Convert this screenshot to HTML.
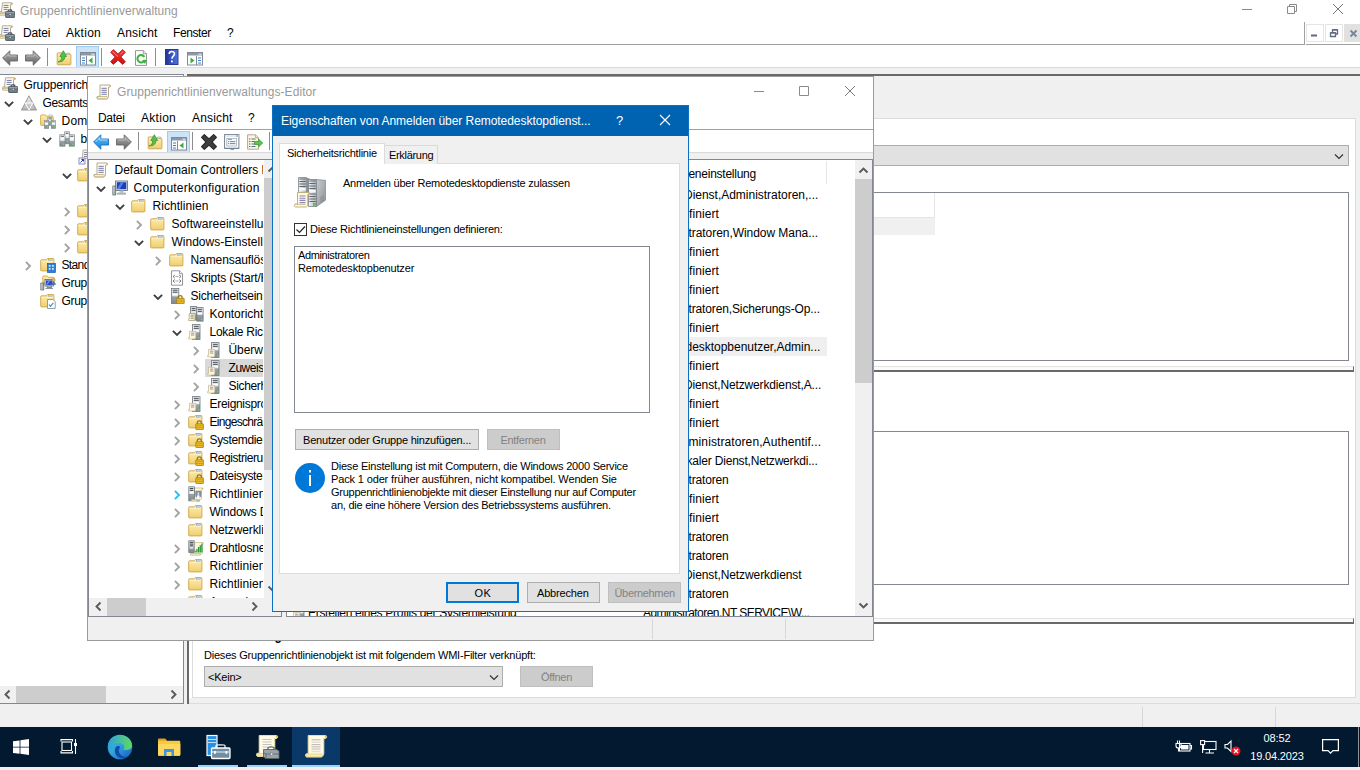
<!DOCTYPE html>
<html><head><meta charset="utf-8"><title>Gruppenrichtlinienverwaltung</title>
<style>
*{box-sizing:border-box;margin:0;padding:0}
html,body{width:1360px;height:770px;overflow:hidden;background:#fff}
body{font-family:"Liberation Sans",sans-serif;font-size:12px;color:#000;position:relative}
.a{position:absolute}
.t{position:absolute;white-space:nowrap;line-height:16px;height:16px;font-size:12px;letter-spacing:.12px}
.m{position:absolute;white-space:nowrap;line-height:14px;height:14px;font-size:11px;letter-spacing:-.24px}
.g{color:#999}
.clip{position:absolute;overflow:hidden}
svg{position:absolute;overflow:visible}
.btn{position:absolute;background:#e1e1e1;border:1px solid #adadad;text-align:center;font-size:11px;letter-spacing:-.24px;line-height:19px;height:21px;white-space:nowrap}
.btn.dis{background:#ccc;border-color:#bfbfbf;color:#838383}
.chev{position:absolute;width:9px;height:9px}
</style></head><body>
<svg width="0" height="0" style="position:absolute">
<defs>
<linearGradient id="gFold" x1="0" y1="0" x2="0" y2="1"><stop offset="0" stop-color="#fdeeb3"/><stop offset="1" stop-color="#f0ce6e"/></linearGradient>
<linearGradient id="gGray" x1="0" y1="0" x2="0" y2="1"><stop offset="0" stop-color="#a8a8a8"/><stop offset=".5" stop-color="#8a8a8a"/><stop offset="1" stop-color="#5e5e5e"/></linearGradient>
<linearGradient id="gBlue" x1="0" y1="0" x2="0" y2="1"><stop offset="0" stop-color="#5cc0f5"/><stop offset="1" stop-color="#1a84d8"/></linearGradient>
<linearGradient id="gSrv" x1="0" y1="0" x2="1" y2="0"><stop offset="0" stop-color="#d8dcdf"/><stop offset="1" stop-color="#8d9499"/></linearGradient>
<linearGradient id="gHelp" x1="0" y1="0" x2="1" y2="0"><stop offset="0" stop-color="#22338f"/><stop offset=".5" stop-color="#3a55c4"/><stop offset="1" stop-color="#4f73dc"/></linearGradient>
<linearGradient id="gTri" x1="0" y1="0" x2="0" y2="1"><stop offset="0" stop-color="#f0f0f0"/><stop offset="1" stop-color="#b4b4b4"/></linearGradient>
<linearGradient id="gSrvV" x1="0" y1="0" x2="0" y2="1"><stop offset="0" stop-color="#f1f3f5"/><stop offset=".5" stop-color="#dfe3e6"/><stop offset=".55" stop-color="#9aa2a9"/><stop offset="1" stop-color="#7f888f"/></linearGradient>
<linearGradient id="gRed" x1="0" y1="0" x2="0" y2="1"><stop offset="0" stop-color="#f43a3a"/><stop offset="1" stop-color="#c80f0f"/></linearGradient>
<linearGradient id="gBox" x1="0" y1="0" x2="0" y2="1"><stop offset="0" stop-color="#9cabb5"/><stop offset="1" stop-color="#64757f"/></linearGradient>
<linearGradient id="gPaper" x1="0" y1="0" x2="1" y2="0"><stop offset="0" stop-color="#fffbe6"/><stop offset="1" stop-color="#f3e3b0"/></linearGradient>

<symbol id="i-scroll" viewBox="0 0 16 16">
<path d="M4 1h9.800c1.100 0 1.100 2.200-.3 2.200h-1v9.300c0 1.300-.9 2.500-2.200 2.500H2c-1.600 0-1.600-2.700 0-2.700h2z" fill="#fffdf0" stroke="#aaa088" stroke-width=".9"/>
<path d="M1.200 12.500h9.800c.9 0 .9 2.300 0 2.300H1.500z" fill="#f8eecb" stroke="#b9a97a" stroke-width=".7"/>
<path d="M5.500 4.300h5.300M5.500 6.300h5.300M5.500 8.300h5.300M5.500 10.300h5.300" stroke="#767aa6" stroke-width="1"/>
<path d="M12.800 1.200l2 .3-.7 1.500z" fill="#dba640"/>
</symbol>

<symbol id="i-gpmc" viewBox="0 0 16 16">
<path d="M3.500 .8h9.300c1 0 1 1.800-.3 1.800h-1v7.600H2.500c-1 0-1 1.600-2 1.600 0-2 .5-2.400 2-2.400z" fill="#fffdf2" stroke="#aaa088" stroke-width=".9"/>
<path d="M.6 11.300h6.500c.8 0 .8 1.900 0 1.900H.8z" fill="#f8eecb" stroke="#b9a97a" stroke-width=".8"/>
<path d="M4.600 3.400h5M4.600 5.400h5M4.600 7.400h4" stroke="#767aa6" stroke-width="1"/>
<path d="M11.500 1l1.900.3-.7 1.400z" fill="#dba640"/>
<path d="M9.200 9.500v-1c0-.8 3.600-.8 3.600 0v1" fill="none" stroke="#3f4a52" stroke-width="1.200"/>
<rect x="6.600" y="9.500" width="9" height="6" rx=".6" fill="url(#gBox)" stroke="#46525a" stroke-width=".8"/>
<path d="M6.600 12.100h9" stroke="#46525a" stroke-width=".7"/>
<rect x="10.300" y="11.300" width="1.700" height="1.900" fill="#eef2f4" stroke="#46525a" stroke-width=".4"/>
</symbol>

<symbol id="i-backg" viewBox="0 0 16 16"><path d="M.6 8l7.200-7.200v4.200h7.700v6H7.800v4.200z" fill="url(#gGray)" stroke="#666" stroke-width=".9" stroke-linejoin="round"/><path d="M2.500 8l4.300-4.300v2.300h7.700" fill="none" stroke="#c4c4c4" stroke-width=".9"/></symbol>
<symbol id="i-fwdg" viewBox="0 0 16 16"><path d="M15.400 8L8.200.8v4.200H.5v6h7.700v4.200z" fill="url(#gGray)" stroke="#666" stroke-width=".9" stroke-linejoin="round"/><path d="M1.500 6h7.700V3.700L13.500 8" fill="none" stroke="#c4c4c4" stroke-width=".9"/></symbol>
<symbol id="i-backb" viewBox="0 0 16 16"><path d="M.6 8l7.200-7.200v4.200h7.700v6H7.800v4.200z" fill="url(#gBlue)" stroke="#1a6fc0" stroke-width=".9" stroke-linejoin="round"/><path d="M2.500 8l4.300-4.300v2.300h7.700" fill="none" stroke="#b8e6fc" stroke-width=".9"/></symbol>

<symbol id="i-folder" viewBox="0 0 16 16"><path d="M.7 3.500c0-.4.3-.7.7-.7h4.800l1.200-1.300h5.800c.4 0 .7.300.7.700v11c0 .4-.3.700-.7.700H1.400c-.4 0-.7-.3-.7-.7z" fill="url(#gFold)" stroke="#cfa448" stroke-width=".9"/><path d="M1.300 4.500h12" stroke="#fff6d0" stroke-width=".7" opacity=".8"/><rect x="8.700" y="2.300" width="3.600" height="1.100" fill="#fff" stroke="#7fa3d6" stroke-width=".5"/></symbol>

<symbol id="i-up" viewBox="0 0 16 16">
<path d="M1.200 3.600c0-.4.300-.7.700-.7h4.300l1 1.300h7c.4 0 .7.300.7.700v9.200c0 .4-.3.700-.7.700H1.900c-.4 0-.7-.3-.7-.7z" fill="url(#gFold)" stroke="#c9a24e" stroke-width=".9"/>
<path d="M10.500 3h3v1h-3z" fill="#fff" stroke="#6f98c8" stroke-width=".5"/>
<path d="M2 11.800c2.800-.6 3.800-2.300 3.600-5.300H3.800L7.300.7l3.300 5.800H8.800c.2 3.600-2.800 5.800-6.800 5.300z" fill="#52c048" stroke="#2f8f2c" stroke-width=".7" stroke-linejoin="round"/>
</symbol>

<symbol id="i-tree" viewBox="0 0 16 16">
<rect x=".5" y="1.500" width="15" height="12.500" fill="#fff" stroke="#7f8a96" stroke-width="1"/>
<rect x="1" y="2" width="14" height="2.500" fill="#8c98a6"/>
<rect x="11.500" y="2.600" width="1.200" height="1.200" fill="#fff"/><rect x="13.200" y="2.600" width="1.200" height="1.200" fill="#fff"/>
<path d="M6.500 5v9" stroke="#7f8a96" stroke-width="1"/>
<path d="M2 7h3M2 9.500h3M2 12h3" stroke="#3c78d0" stroke-width="1.200"/>
<path d="M12.500 6.500v6l-4-3z" fill="#3cae3c"/>
</symbol>

<symbol id="i-pane" viewBox="0 0 16 16">
<rect x=".5" y="1.500" width="15" height="12.500" fill="#fff" stroke="#7f8a96" stroke-width="1"/>
<rect x="1" y="2" width="14" height="2.500" fill="#8c98a6"/>
<rect x="11.500" y="2.600" width="1.200" height="1.200" fill="#fff"/><rect x="13.200" y="2.600" width="1.200" height="1.200" fill="#fff"/>
<path d="M9.500 5v9" stroke="#7f8a96" stroke-width="1"/>
<path d="M11 7h3M11 9.500h3M11 12h3" stroke="#3c78d0" stroke-width="1.200"/>
<path d="M3.500 6.500v6l4-3z" fill="#3cae3c"/>
</symbol>

<symbol id="i-xred" viewBox="0 0 16 16"><path d="M3.300 .6L8 4.900 12.700 .6l2.700 2.700L10.900 8l4.500 4.700-2.700 2.700L8 11.100l-4.700 4.300-2.700-2.700L5.100 8 .6 3.300z" fill="url(#gRed)" stroke="#b01010" stroke-width=".8" stroke-linejoin="round"/><path d="M2.600 2.600l5.400 5M13.400 2.600l-3 2.800" stroke="#ff8a8a" stroke-width=".9" fill="none"/></symbol>
<symbol id="i-xblk" viewBox="0 0 16 16"><path d="M3.300 .6L8 4.900 12.700 .6l2.700 2.700L10.900 8l4.500 4.700-2.700 2.700L8 11.100l-4.700 4.300-2.700-2.700L5.100 8 .6 3.300z" fill="#3e3e3e" stroke="#2a2a2a" stroke-width="1.200" stroke-linejoin="round"/></symbol>

<symbol id="i-refresh" viewBox="0 0 16 16">
<path d="M2.500 .6h7.800l3.200 3.200v11.600h-11z" fill="#fff" stroke="#8a8a8a" stroke-width=".9"/>
<path d="M10.300 .6v3.200h3.200" fill="#ececec" stroke="#8a8a8a" stroke-width=".8"/>
<path d="M11.700 9.800a3.700 3.700 0 1 1-.3-2.800" fill="none" stroke="#3fb53f" stroke-width="2.100"/>
<path d="M9 10.300l5-.6-2 4.200z" fill="#3fb53f"/>
</symbol>

<symbol id="i-help" viewBox="0 0 16 16">
<rect x="1.500" y=".5" width="12.500" height="15" fill="url(#gHelp)" stroke="#1f2f8c" stroke-width=".9"/>
<path d="M5.200 5c0-3.300 5.300-3.300 5.300-.2 0 2.300-2.600 2.500-2.600 5" fill="none" stroke="#fff" stroke-width="1.600"/>
<rect x="7" y="11.500" width="1.800" height="1.800" fill="#fff"/>
</symbol>

<symbol id="i-props" viewBox="0 0 16 16">
<rect x=".6" y=".6" width="14.300" height="13.800" fill="#fff" stroke="#78838f" stroke-width="1"/>
<rect x="1.100" y="1.100" width="13.300" height="2" fill="#e4e8ec"/>
<rect x="12.300" y="1.400" width="1.400" height="1.200" fill="#78838f"/>
<rect x="2.800" y="4.500" width="9.800" height="7.500" fill="#f7f9fb" stroke="#9aa5b2" stroke-width=".7"/>
<path d="M4 5.500h4" stroke="#8a96a4" stroke-width=".9"/>
<path d="M5.800 7.600h5.500M5.800 9.600h5.500" stroke="#5d78a8" stroke-width=".9"/>
<path d="M4 7.600h1M4 9.600h1" stroke="#2a8fe0" stroke-width=".9"/>
<path d="M.6 14.400h14.300" stroke="#78838f" stroke-width="1.200"/>
<path d="M6.500 15.200h3.500" stroke="#2aa0ee" stroke-width="1.300"/>
</symbol>

<symbol id="i-export" viewBox="0 0 16 16">
<path d="M.6 .8h8l3 3v11.400H.6z" fill="#fbf6e2" stroke="#a9a27e" stroke-width=".9"/>
<path d="M8.600 .8v3h3" fill="#ece4c2" stroke="#a9a27e" stroke-width=".8"/>
<path d="M4.500 5h4M4.500 7.500h3M4.500 10h3M4.500 12.500h4" stroke="#5d6898" stroke-width="1"/>
<path d="M2.300 5h1M2.300 7.500h1M2.300 10h1M2.300 12.500h1" stroke="#333" stroke-width="1"/>
<path d="M7.500 7.500h4.200V5.200l4 3.800-4 3.800v-2.300H7.500z" fill="#55c84e" stroke="#2f922c" stroke-width=".7" stroke-linejoin="round"/>
</symbol>

<symbol id="i-forest" viewBox="0 0 16 16">
<path d="M8 .8l7.500 14.200H.5z" fill="url(#gTri)" stroke="#8f8f8f" stroke-width=".9" stroke-linejoin="round"/>
<path d="M4.300 8h7.400M4.300 8L8 15M11.700 8L8 15" fill="none" stroke="#fff" stroke-width="1"/>
</symbol>

<symbol id="i-srvs" viewBox="0 0 16 16">
<rect x="5.700" y=".8" width="4.800" height="12" fill="url(#gSrvV)" stroke="#7b8389" stroke-width=".7"/>
<rect x=".8" y="3.800" width="5.200" height="11.400" fill="url(#gSrvV)" stroke="#7b8389" stroke-width=".7"/>
<rect x="10.200" y="3.800" width="5.200" height="11.400" fill="url(#gSrvV)" stroke="#7b8389" stroke-width=".7"/>
<path d="M6.700 2.300h2.800M1.800 5.300h3.200M11.200 5.300h3.200" stroke="#4a5157" stroke-width=".9"/>
<rect x="1.600" y="6.800" width="3.600" height="1.600" fill="#fff"/><rect x="11" y="6.800" width="3.600" height="1.600" fill="#fff"/><rect x="6.500" y="3.800" width="3.200" height="1.500" fill="#fff"/>
<rect x="3.800" y="12.600" width="1.500" height="1.500" fill="#66e24a"/><rect x="13.200" y="12.600" width="1.500" height="1.500" fill="#66e24a"/><rect x="8" y="9.800" width="1.500" height="1.500" fill="#66e24a"/>
</symbol>

<symbol id="i-domfolder" viewBox="0 0 16 16">
<path d="M.6 2.700c0-.5.3-.8.8-.8h3.800l1 1.300h6.200c.5 0 .8.300.8.800v7.700c0 .5-.3.800-.8.800H1.400c-.5 0-.8-.3-.8-.8z" fill="url(#gFold)" stroke="#d3a84a" stroke-width=".9"/>
<rect x="9" y="1.900" width="3.400" height="1.200" fill="#fff" stroke="#86a6cf" stroke-width=".5"/>
<rect x="7.800" y="4.600" width="4" height="7" fill="url(#gSrvV)" stroke="#7b8389" stroke-width=".6"/>
<rect x="4.500" y="7.600" width="4.200" height="7.800" fill="url(#gSrvV)" stroke="#7b8389" stroke-width=".6"/>
<rect x="11.300" y="7.600" width="4.200" height="7.800" fill="url(#gSrvV)" stroke="#7b8389" stroke-width=".6"/>
<path d="M5.300 8.800h2.600M12.100 8.800h2.600M8.600 5.800h2.400" stroke="#4a5157" stroke-width=".8"/>
<rect x="5.200" y="9.900" width="2.800" height="1.300" fill="#fff"/><rect x="12" y="9.900" width="2.800" height="1.300" fill="#fff"/>
<rect x="6.800" y="13.300" width="1.300" height="1.300" fill="#66e24a"/><rect x="13.600" y="13.300" width="1.300" height="1.300" fill="#66e24a"/><rect x="9.600" y="9.300" width="1.300" height="1.300" fill="#66e24a"/>
</symbol>

<symbol id="i-flock" viewBox="0 0 16 16"><path d="M.7 3.500c0-.4.3-.7.7-.7h4.800l1.200-1.300h5.800c.4 0 .7.300.7.700v11c0 .4-.3.700-.7.700H1.400c-.4 0-.7-.3-.7-.7z" fill="url(#gFold)" stroke="#cfa448" stroke-width=".9"/><path d="M1.300 4.500h12" stroke="#fff6d0" stroke-width=".7" opacity=".8"/><rect x="8.700" y="2.300" width="3.600" height="1.100" fill="#fff" stroke="#7fa3d6" stroke-width=".5"/>
<path d="M9.300 10V8.600c0-2.400 4-2.400 4 0V10" fill="none" stroke="#9a7612" stroke-width="1.300"/>
<rect x="7.800" y="9.800" width="7.600" height="5.700" rx=".5" fill="#eebc2a" stroke="#a37c12" stroke-width=".8"/>
<path d="M8.400 11.700h6.400M8.400 13.500h6.400" stroke="#c0941a" stroke-width=".7"/>
</symbol>

<symbol id="i-comp" viewBox="0 0 16 16">
<rect x="3.500" y="1" width="12" height="9.500" fill="#dfe3e7" stroke="#6e7880" stroke-width=".9"/>
<rect x="4.800" y="2.200" width="9.500" height="7" fill="#1a3fb8"/>
<path d="M4.800 9.200l4-7h3l-4 7z" fill="#5f8af0" opacity=".8"/>
<path d="M7.500 10.500h4v2h-4z" fill="#b8bfc5"/><path d="M5.500 13h8v1.200h-8z" fill="#cfd4d8" stroke="#7d868d" stroke-width=".6"/>
<rect x=".8" y="6" width="3" height="9" fill="url(#gSrv)" stroke="#5f676d" stroke-width=".7"/>
<rect x="1.500" y="12.500" width="1.200" height="1.200" fill="#4fd04a"/>
</symbol>

<symbol id="i-script" viewBox="0 0 16 16">
<path d="M2.500 .8h8l3 3v11.400h-11z" fill="#fff" stroke="#8a8a8a" stroke-width=".9"/>
<path d="M10.500 .8v3h3" fill="#eee" stroke="#8a8a8a" stroke-width=".8"/>
<path d="M5.800 5L4 6.500 5.800 8M10.200 5L12 6.500 10.200 8M5.800 9.500L4 11l1.800 1.500M10.200 9.500L12 11l-1.800 1.500" fill="none" stroke="#5c6670" stroke-width=".9"/>
<path d="M6.600 6.500h2.800M6.600 11h2.800" stroke="#5c6670" stroke-width=".9" stroke-dasharray="1 .8"/>
</symbol>

<symbol id="i-srvlock" viewBox="0 0 16 16">
<rect x="2.500" y=".5" width="7.300" height="15" fill="url(#gSrvV)" stroke="#6f777d" stroke-width=".8"/>
<path d="M3.700 2.200h4.900M3.700 4.200h4.900" stroke="#3e454a" stroke-width="1"/>
<rect x="3.500" y="5.800" width="5.300" height="1.400" fill="#fff"/>
<path d="M9.300 10.500V9.300c0-2.300 3.800-2.300 3.800 0v1.200" fill="none" stroke="#9a7612" stroke-width="1.300"/>
<rect x="7.600" y="10.300" width="7.600" height="5.400" rx=".5" fill="#eebc2a" stroke="#a37c12" stroke-width=".8"/>
<path d="M8.200 12.100h6.400M8.200 13.800h6.400" stroke="#c0941a" stroke-width=".7"/>
</symbol>

<symbol id="i-srvdoc" viewBox="0 0 16 16">
<rect x="4.500" y=".6" width="7.500" height="14.800" fill="url(#gSrvV)" stroke="#6f777d" stroke-width=".8"/>
<path d="M5.800 2.300h5M5.800 4.300h5" stroke="#3e454a" stroke-width="1"/>
<rect x="5.500" y="6" width="5.500" height="1.400" fill="#fff"/>
<rect x="10" y="13" width="1.500" height="1.500" fill="#5fe04a"/>
<path d="M1.500 7.300h6.300v6c0 1-.6 1.700-1.300 1.700H.9c-.8 0-.8-1.600 0-1.600h.6z" fill="#fff6d8" stroke="#c2b48a" stroke-width=".7"/>
<path d="M3 9.200h3.300M3 11h3.300" stroke="#8a86b0" stroke-width=".9"/>
</symbol>

<symbol id="i-srvdoc2" viewBox="0 0 16 16">
<rect x="2.500" y=".6" width="6.300" height="13.500" fill="url(#gSrvV)" stroke="#6f777d" stroke-width=".8"/>
<rect x="8.800" y="1.600" width="6.300" height="13.500" fill="url(#gSrvV)" stroke="#6f777d" stroke-width=".8"/>
<path d="M3.600 2.300h4M3.600 4.300h4M9.900 3.300h4M9.900 5.300h4" stroke="#3e454a" stroke-width="1"/>
<rect x="9.800" y="7" width="4.300" height="1.300" fill="#fff"/>
<rect x="13" y="12.800" width="1.500" height="1.500" fill="#5fe04a"/>
<path d="M1.200 7.500h5.800v5.500c0 1-.6 1.600-1.200 1.600H.8c-.7 0-.7-1.500 0-1.500h.4z" fill="url(#gPaper)" stroke="#b3a47a" stroke-width=".8"/>
<path d="M2.600 9.200h3M2.600 10.800h3M2.600 12.300h3" stroke="#8d8a92" stroke-width=".8"/>
</symbol>

<symbol id="i-ipsec" viewBox="0 0 16 16">
<path d="M6.500 2h8c.9 0 .9 1.600-.2 1.600h-.8v8.400c0 1-.6 1.800-1.500 1.800H4.500c-.9 0-.9-1.700 0-1.700h2z" fill="#fff6d8" stroke="#c2b48a" stroke-width=".7"/>
<path d="M13.800 2.100l1.400.3-.5 1z" fill="#dba640"/>
<rect x=".8" y=".8" width="5.600" height="14" fill="url(#gSrvV)" stroke="#6f777d" stroke-width=".8"/>
<path d="M1.800 2.400h3.600M1.800 4.300h3.600" stroke="#2f363b" stroke-width="1"/>
<rect x="1.600" y="5.800" width="4" height="1.300" fill="#fff"/>
<path d="M7.800 5.200h5v4.500c0 2.600-5 2.600-5 0z" fill="#8c98aa" stroke="#5f6b7e" stroke-width=".7"/>
<path d="M10.300 6.600v2.200M9.500 9.800h1.600v2.500H9.500z" stroke="#fff" stroke-width="1" fill="#fff"/>
<path d="M3.500 13.400h7.500c.7 0 .7 1.600 0 1.600H3.500z" fill="#f8eecb" stroke="#b9a97a" stroke-width=".6"/>
<path d="M9 14.500v1.200M11 14.500v1.200" stroke="#2a7fd0" stroke-width=".9"/>
</symbol>

<symbol id="i-wifi" viewBox="0 0 16 16">
<path d="M5.500 2.500h9.800c.9 0 .9 1.600-.2 1.600h-.6v8.200c0 1-.6 1.800-1.500 1.800H3.500c-.9 0-.9-1.700 0-1.700h2z" fill="#fff6d8" stroke="#c2b48a" stroke-width=".7"/>
<rect x=".8" y=".8" width="5.400" height="11.700" fill="url(#gSrvV)" stroke="#6f777d" stroke-width=".8"/>
<path d="M1.700 2.300h3.600M1.700 4.100h3.600M1.700 5.900h3.600" stroke="#2f363b" stroke-width="1"/>
<rect x="1.600" y="7.300" width="3.800" height="1.200" fill="#fff"/>
<path d="M5.800 12.500L14.500 3v9.500z" fill="#e6f3e2"/>
<path d="M7.200 12.500v-1.800M8.900 12.500v-3.600M10.600 12.500v-5.400M12.300 12.500v-7.200M13.900 12.500v-9" stroke="#2c9a3a" stroke-width="1.300"/>
<path d="M2.500 13.600h9.500c.7 0 .7 1.600 0 1.600H2.500z" fill="#f8eecb" stroke="#b9a97a" stroke-width=".6"/>
</symbol>

<symbol id="i-sites" viewBox="0 0 16 16"><path d="M.7 3.500c0-.4.3-.7.7-.7h4.800l1.200-1.300h5.800c.4 0 .7.300.7.700v11c0 .4-.3.700-.7.700H1.400c-.4 0-.7-.3-.7-.7z" fill="url(#gFold)" stroke="#cfa448" stroke-width=".9"/><path d="M1.300 4.500h12" stroke="#fff6d0" stroke-width=".7" opacity=".8"/><rect x="8.700" y="2.300" width="3.600" height="1.100" fill="#fff" stroke="#7fa3d6" stroke-width=".5"/>
<rect x="7.500" y="6.500" width="8" height="9" fill="#2f7fd8" stroke="#1c5aa8" stroke-width=".7"/>
<path d="M8.800 8h1.800v1.800H8.800zM12 8h1.800v1.800H12zM8.800 11h1.800v1.800H8.800zM12 11h1.800v1.800H12z" fill="#cfe6ff"/>
</symbol>

<symbol id="i-model" viewBox="0 0 16 16">
<path d="M2.800 1.800c0-.5.3-.8.800-.8h3.800l1 1.300h5c.5 0 .8.300.8.800v6H2.800z" fill="url(#gFold)" stroke="#d3a84a" stroke-width=".9"/>
<rect x="5" y="4.500" width="8.500" height="6.500" fill="#dfe3e7" stroke="#5f676d" stroke-width=".8"/>
<rect x="6" y="5.400" width="6.500" height="4.600" fill="#2a50c8"/>
<path d="M7 9.500l2.500-4M9 12.500h3" stroke="#9db8ff" stroke-width=".8"/>
<rect x=".8" y="8" width="3" height="7" fill="url(#gSrv)" stroke="#5f676d" stroke-width=".7"/>
<path d="M7 11h4.500v1.500H7zM5.500 13.500h7.500" stroke="#6e7880" stroke-width=".8" fill="#cfd4d8"/>
<circle cx="13.500" cy="5" r="1.600" fill="#e8c07a" stroke="#8a6a3a" stroke-width=".5"/>
<path d="M11.500 9.500c0-2.600 4-2.600 4 0z" fill="#4a7fd0" stroke="#2c5aa0" stroke-width=".5"/>
</symbol>

<symbol id="i-result" viewBox="0 0 16 16"><path d="M.7 3.500c0-.4.3-.7.7-.7h4.800l1.200-1.300h5.800c.4 0 .7.300.7.700v11c0 .4-.3.700-.7.700H1.400c-.4 0-.7-.3-.7-.7z" fill="url(#gFold)" stroke="#cfa448" stroke-width=".9"/><path d="M1.300 4.500h12" stroke="#fff6d0" stroke-width=".7" opacity=".8"/><rect x="8.700" y="2.300" width="3.600" height="1.100" fill="#fff" stroke="#7fa3d6" stroke-width=".5"/>
<path d="M7.500 6.500h5.500l2.200 2.200v6.800H7.500z" fill="#fff" stroke="#7d868d" stroke-width=".8"/>
<path d="M9 11.500l1.500 1.800 2.800-3.500" fill="none" stroke="#2a8fd0" stroke-width="1.100"/>
</symbol>

<symbol id="i-gpolink" viewBox="0 0 16 16">
<path d="M5 1h8c.8 0 .8 1.600-.2 1.600h-.8v7H4.500c-.8 0-.8 1.400-1.800 1.400 0-1.800.5-2.200 1.800-2.200z" fill="url(#gPaper)" stroke="#a99f82" stroke-width=".8"/>
<path d="M6 3.500h4.500M6 5.500h4.500M6 7.500h4" stroke="#7b7fa8" stroke-width=".9"/>
<rect x="1" y="9" width="6" height="6" fill="#fff" stroke="#6b6fb8" stroke-width=".8"/>
<path d="M2.500 13.500l3-3M3.500 10.500h2v2" fill="none" stroke="#2a2ab0" stroke-width="1"/>
</symbol>

<symbol id="c-exp" viewBox="0 0 10 10"><path d="M.9 2.900l4.100 4.100 4.100-4.100" fill="none" stroke="#404040" stroke-width="1.900"/></symbol>
<symbol id="c-col" viewBox="0 0 10 10"><path d="M2.900 .9l4.100 4.100-4.100 4.100" fill="none" stroke="#a3a3a3" stroke-width="1.900"/></symbol>
<symbol id="c-hot" viewBox="0 0 10 10"><path d="M2.900 .9l4.100 4.100-4.100 4.100" fill="none" stroke="#26c0f2" stroke-width="1.900"/></symbol>
</defs></svg>
<svg class="a" style="left:-1px;top:2px" width="16" height="16"><use href="#i-gpmc"/></svg>
<div class="t" style="left:20px;top:3px;letter-spacing:0.088px;color:#999">Gruppenrichtlinienverwaltung</div>
<svg class="a" style="left:1230px;top:0" width="130" height="22"><g stroke="#8a8a8a" stroke-width="1" fill="none"><path d="M12 9.500h10"/><path d="M57.500 6.500h7v7h-7zM59.500 6.500v-2h7v7h-2"/><path d="M103 4l10 10M113 4l-10 10" stroke="#777"/></g></svg>
<svg class="a" style="left:-1px;top:25px" width="16" height="16"><use href="#i-gpmc"/></svg>
<div class="t" style="left:23px;top:25px;letter-spacing:-0.179px;">Datei</div>
<div class="t" style="left:66px;top:25px;letter-spacing:0.288px;">Aktion</div>
<div class="t" style="left:117px;top:25px;letter-spacing:0.157px;">Ansicht</div>
<div class="t" style="left:173px;top:25px;letter-spacing:-0.398px;">Fenster</div>
<div class="t" style="left:227px;top:25px;">?</div>
<div class="a" style="left:0;top:44px;width:1304px;height:1px;background:#a0a0a0"></div>
<div class="a" style="left:1304px;top:22px;width:1px;height:23px;background:#a0a0a0"></div>
<div class="a" style="left:1306px;top:44px;width:54px;height:1px;background:#a0a0a0"></div>
<div class="a" style="left:1306px;top:24px;width:18px;height:18px;border:1px solid #e5e5e5;background:#fff"></div>
<div class="a" style="left:1325px;top:24px;width:18px;height:18px;border:1px solid #e5e5e5;background:#fff"></div>
<div class="a" style="left:1344px;top:24px;width:16px;height:18px;background:#e1e1e1"></div>
<svg class="a" style="left:1306px;top:24px" width="54" height="18"><g fill="none" stroke="#5d6b80"><path d="M5 11.500h6" stroke-width="2"/><path d="M24.500 9h5v3.500h-5zM24.500 8.700h5M26.500 8v-2h5v4h-2M26.500 5.700h5" stroke-width="1.300"/><path d="M44.500 6.500l6 6M50.500 6.500l-6 6" stroke="#74869c" stroke-width="1.800"/></g></svg>
<svg class="a" style="left:2px;top:49.5px" width="16" height="16"><use href="#i-backg"/></svg>
<svg class="a" style="left:25px;top:49.5px" width="16" height="16"><use href="#i-fwdg"/></svg>
<div class="a" style="left:47px;top:48px;width:1px;height:18px;background:#8d8d8d"></div>
<svg class="a" style="left:56px;top:49.5px" width="16" height="16"><use href="#i-up"/></svg>
<div class="a" style="left:76px;top:46px;width:23px;height:22px;background:#cce4f7;border:1px solid #9fcdf3"></div>
<svg class="a" style="left:80px;top:51px" width="16" height="16"><use href="#i-tree"/></svg>
<div class="a" style="left:101px;top:48px;width:1px;height:18px;background:#8d8d8d"></div>
<svg class="a" style="left:110px;top:49px" width="16" height="16"><use href="#i-xred"/></svg>
<svg class="a" style="left:133px;top:50px" width="16" height="16"><use href="#i-refresh"/></svg>
<div class="a" style="left:155px;top:48px;width:1px;height:18px;background:#8d8d8d"></div>
<svg class="a" style="left:164px;top:49px" width="16" height="16"><use href="#i-help"/></svg>
<svg class="a" style="left:187px;top:51px" width="16" height="16"><use href="#i-pane"/></svg>
<div class="a" style="left:0;top:67px;width:1360px;height:1px;background:#dadada"></div>
<div class="a" style="left:0;top:68px;width:1360px;height:6px;background:#f0f0f0"></div>
<div class="a" style="left:0;top:74px;width:184px;height:1px;background:#828790"></div>
<div class="a" style="left:187px;top:74px;width:1173px;height:2px;background:#696969"></div>
<div class="a" style="left:184px;top:74px;width:3px;height:630px;background:#f0f0f0"></div>
<div class="a" style="left:183px;top:75px;width:1px;height:629px;background:#828790"></div>
<div class="a" style="left:0;top:703px;width:184px;height:1px;background:#828790"></div>
<div class="a" style="left:187px;top:76px;width:2px;height:628px;background:#696969"></div>
<div class="clip" style="left:0;top:75px;width:183px;height:611px">
<svg class="a" style="left:2px;top:2px" width="16" height="16"><use href="#i-gpmc"/></svg>
<div class="t" style="left:23.5px;top:2px;letter-spacing:-0.125px;">Gruppenrichtlinienverwaltung</div>
<svg class="a" style="left:4px;top:23.8px" width="10" height="10"><use href="#c-exp"/></svg>
<svg class="a" style="left:21px;top:20px" width="16" height="16"><use href="#i-forest"/></svg>
<div class="t" style="left:42.5px;top:20px;letter-spacing:-0.369px;">Gesamtstruktur</div>
<svg class="a" style="left:23px;top:41.8px" width="10" height="10"><use href="#c-exp"/></svg>
<svg class="a" style="left:40px;top:38px" width="16" height="16"><use href="#i-domfolder"/></svg>
<div class="t" style="left:61.5px;top:38px;letter-spacing:0.228px;">Domänen</div>
<svg class="a" style="left:42px;top:59.8px" width="10" height="10"><use href="#c-exp"/></svg>
<svg class="a" style="left:59px;top:56px" width="16" height="16"><use href="#i-srvs"/></svg>
<div class="t" style="left:80.5px;top:56px;">beispiel.local</div>
<svg class="a" style="left:78px;top:74px" width="16" height="16"><use href="#i-gpolink"/></svg>
<svg class="a" style="left:62px;top:95.8px" width="10" height="10"><use href="#c-exp"/></svg>
<svg class="a" style="left:76.5px;top:92px" width="16" height="16"><use href="#i-folder"/></svg>
<svg class="a" style="left:62px;top:131.8px" width="10" height="10"><use href="#c-col"/></svg>
<svg class="a" style="left:76.5px;top:128px" width="16" height="16"><use href="#i-folder"/></svg>
<svg class="a" style="left:62px;top:149.8px" width="10" height="10"><use href="#c-col"/></svg>
<svg class="a" style="left:76.5px;top:146px" width="16" height="16"><use href="#i-folder"/></svg>
<svg class="a" style="left:62px;top:167.8px" width="10" height="10"><use href="#c-col"/></svg>
<svg class="a" style="left:76.5px;top:164px" width="16" height="16"><use href="#i-folder"/></svg>
<svg class="a" style="left:23px;top:185.8px" width="10" height="10"><use href="#c-col"/></svg>
<svg class="a" style="left:40px;top:182px" width="16" height="16"><use href="#i-sites"/></svg>
<div class="t" style="left:61.5px;top:182px;letter-spacing:-0.629px;">Standorte</div>
<svg class="a" style="left:40px;top:200px" width="16" height="16"><use href="#i-model"/></svg>
<div class="t" style="left:61.5px;top:200px;letter-spacing:-0.296px;">Gruppenrichtlinienmodellierung</div>
<svg class="a" style="left:40px;top:218px" width="16" height="16"><use href="#i-result"/></svg>
<div class="t" style="left:61.5px;top:218px;letter-spacing:-0.296px;">Gruppenrichtlinienergebnisse</div>
</div>
<div class="a" style="left:0;top:686px;width:183px;height:17px;background:#f0f0f0"></div>
<div class="a" style="left:16px;top:686px;width:90px;height:17px;background:#cdcdcd"></div>
<svg class="a" style="left:0;top:686px" width="183" height="17"><g fill="none" stroke="#5a5a5a" stroke-width="1.900"><path d="M9.500 4.500l-4 4 4 4"/><path d="M171.500 4.500l4 4-4 4"/></g></svg>
<div class="a" style="left:189px;top:76px;width:1171px;height:42px;background:#f0f0f0"></div>
<div class="a" style="left:1355px;top:76px;width:5px;height:630px;background:#f0f0f0"></div>
<div class="a" style="left:1355px;top:118px;width:1px;height:581px;background:#dcdcdc"></div>
<div class="a" style="left:192px;top:118px;width:1163px;height:580px;border:1px solid #dcdcdc;border-right:none"></div>
<div class="a" style="left:189px;top:698px;width:1171px;height:5px;background:#f0f0f0"></div>
<div class="a" style="left:204px;top:145px;width:1145px;height:21px;background:#e1e1e1;border:1px solid #adadad"></div>
<svg class="a" style="left:1334px;top:152.500px" width="10" height="8"><path d="M1 1.500l4 4 4-4" fill="none" stroke="#333" stroke-width="1.200"/></svg>
<div class="a" style="left:204px;top:192px;width:1145px;height:169px;background:#fff;border:1px solid #828790"></div>
<div class="a" style="left:874px;top:193px;width:61px;height:25px;border-right:1px solid #e5e5e5;border-bottom:1px solid #e5e5e5"></div>
<div class="a" style="left:874px;top:218px;width:61px;height:17px;background:#f0f0f0"></div>
<div class="a" style="left:193px;top:366px;width:1161px;height:6px;background:#fafafa;border-top:1px solid #e3e3e3;border-bottom:2px solid #696969;border-right:1px solid #696969"></div>
<div class="a" style="left:204px;top:431px;width:1145px;height:154px;background:#fff;border:1px solid #828790"></div>
<div class="a" style="left:193px;top:618px;width:1161px;height:6px;background:#fafafa;border-top:1px solid #e3e3e3;border-bottom:2px solid #696969;border-right:1px solid #696969"></div>
<div class="m" style="left:203px;top:629px;font-size:12px;letter-spacing:-0.099px;font-weight:bold">WMI-Filterung</div>
<div class="m" style="left:204px;top:648px;letter-spacing:-0.212px;">Dieses Gruppenrichtlinienobjekt ist mit folgendem WMI-Filter verknüpft:</div>
<div class="a" style="left:204px;top:666px;width:299px;height:21px;background:#e1e1e1;border:1px solid #adadad"></div>
<div class="m" style="left:208px;top:670px;letter-spacing:-0.215px;">&lt;Kein&gt;</div>
<svg class="a" style="left:489px;top:674px" width="10" height="8"><path d="M1 1.500l4 4 4-4" fill="none" stroke="#333" stroke-width="1.200"/></svg>
<div class="btn dis" style="left:520px;top:666px;width:73px;line-height:21px;letter-spacing:-.3px">Öffnen</div>
<div class="a" style="left:0;top:704px;width:1360px;height:23px;background:#f0f0f0"></div>
<div class="a" style="left:189px;top:703px;width:1171px;height:1px;background:#dcdcdc"></div>
<div class="a" style="left:1142px;top:707px;width:1px;height:20px;background:#d7d7d7"></div>
<div class="a" style="left:1275px;top:707px;width:1px;height:20px;background:#d7d7d7"></div>
<div class="a" style="left:87px;top:76px;width:787px;height:565px;background:#fff;border:1px solid #9b9b9b"></div>
<svg class="a" style="left:95.5px;top:83.5px" width="16" height="16"><use href="#i-scroll"/></svg>
<div class="t" style="left:117px;top:84px;letter-spacing:0.072px;color:#999">Gruppenrichtlinienverwaltungs-Editor</div>
<svg class="a" style="left:740px;top:77px" width="132" height="28"><g stroke="#8a8a8a" stroke-width="1" fill="none"><path d="M14 14.500h10"/><path d="M59.500 9.500h9v9h-9z"/><path d="M105 9l10 10M115 9l-10 10" stroke="#7a7a7a"/></g></svg>
<div class="t" style="left:98px;top:110px;letter-spacing:-0.304px;">Datei</div>
<div class="t" style="left:141px;top:110px;letter-spacing:0.288px;">Aktion</div>
<div class="t" style="left:192px;top:110px;letter-spacing:0.157px;">Ansicht</div>
<div class="t" style="left:248px;top:110px;">?</div>
<div class="a" style="left:88px;top:129px;width:785px;height:1px;background:#a0a0a0"></div>
<svg class="a" style="left:93px;top:134.3px" width="16" height="16"><use href="#i-backb"/></svg>
<svg class="a" style="left:116px;top:134.3px" width="16" height="16"><use href="#i-fwdg"/></svg>
<div class="a" style="left:138px;top:132px;width:1px;height:18px;background:#8d8d8d"></div>
<svg class="a" style="left:147px;top:134px" width="16" height="16"><use href="#i-up"/></svg>
<div class="a" style="left:167px;top:131px;width:23px;height:22px;background:#cce4f7;border:1px solid #9fcdf3"></div>
<svg class="a" style="left:171px;top:136px" width="16" height="16"><use href="#i-tree"/></svg>
<div class="a" style="left:192px;top:132px;width:1px;height:18px;background:#8d8d8d"></div>
<svg class="a" style="left:201px;top:134px" width="16" height="16"><use href="#i-xblk"/></svg>
<svg class="a" style="left:224px;top:134px" width="16" height="16"><use href="#i-props"/></svg>
<svg class="a" style="left:247px;top:133.5px" width="16" height="16"><use href="#i-export"/></svg>
<div class="a" style="left:269px;top:132px;width:1px;height:18px;background:#8d8d8d"></div>
<div class="a" style="left:88px;top:152px;width:785px;height:1px;background:#dadada"></div>
<div class="a" style="left:88px;top:153px;width:785px;height:6px;background:#f0f0f0"></div>
<div class="a" style="left:88px;top:159px;width:194px;height:458px;background:#fff;border:1px solid #828790"></div>
<div class="a" style="left:282px;top:153px;width:4px;height:464px;background:#f0f0f0"></div>
<div class="clip" style="left:89px;top:160px;width:174px;height:438px">
<svg class="a" style="left:4px;top:2px" width="16" height="16"><use href="#i-scroll"/></svg>
<div class="t" style="left:25.5px;top:2px;letter-spacing:-0.010px;">Default Domain Controllers Policy</div>
<svg class="a" style="left:6.600000000000001px;top:23.8px" width="10" height="10"><use href="#c-exp"/></svg>
<svg class="a" style="left:23px;top:20px" width="16" height="16"><use href="#i-comp"/></svg>
<div class="t" style="left:44.5px;top:20px;letter-spacing:0.220px;">Computerkonfiguration</div>
<svg class="a" style="left:25.6px;top:41.8px" width="10" height="10"><use href="#c-exp"/></svg>
<svg class="a" style="left:42px;top:38px" width="16" height="16"><use href="#i-folder"/></svg>
<div class="t" style="left:63.5px;top:38px;letter-spacing:0.044px;">Richtlinien</div>
<svg class="a" style="left:44.6px;top:59.8px" width="10" height="10"><use href="#c-col"/></svg>
<svg class="a" style="left:61px;top:56px" width="16" height="16"><use href="#i-folder"/></svg>
<div class="t" style="left:82.5px;top:56px;letter-spacing:0.039px;">Softwareeinstellungen</div>
<svg class="a" style="left:44.6px;top:77.8px" width="10" height="10"><use href="#c-exp"/></svg>
<svg class="a" style="left:61px;top:74px" width="16" height="16"><use href="#i-folder"/></svg>
<div class="t" style="left:82.5px;top:74px;letter-spacing:-0.004px;">Windows-Einstellungen</div>
<svg class="a" style="left:63.6px;top:95.8px" width="10" height="10"><use href="#c-col"/></svg>
<svg class="a" style="left:80px;top:92px" width="16" height="16"><use href="#i-folder"/></svg>
<div class="t" style="left:101.5px;top:92px;letter-spacing:-0.092px;">Namensauflösungsrichtlinie</div>
<svg class="a" style="left:80px;top:110px" width="16" height="16"><use href="#i-script"/></svg>
<div class="t" style="left:101.5px;top:110px;letter-spacing:-0.171px;">Skripts (Start/Herunterfahren)</div>
<svg class="a" style="left:63.6px;top:131.8px" width="10" height="10"><use href="#c-exp"/></svg>
<svg class="a" style="left:80px;top:128px" width="16" height="16"><use href="#i-srvlock"/></svg>
<div class="t" style="left:101.5px;top:128px;letter-spacing:-0.237px;">Sicherheitseinstellungen</div>
<svg class="a" style="left:82.6px;top:149.8px" width="10" height="10"><use href="#c-col"/></svg>
<svg class="a" style="left:99px;top:146px" width="16" height="16"><use href="#i-srvdoc2"/></svg>
<div class="t" style="left:120.5px;top:146px;letter-spacing:-0.026px;">Kontorichtlinien</div>
<svg class="a" style="left:82.6px;top:167.8px" width="10" height="10"><use href="#c-exp"/></svg>
<svg class="a" style="left:99px;top:164px" width="16" height="16"><use href="#i-srvdoc"/></svg>
<div class="t" style="left:120.5px;top:164px;letter-spacing:-0.270px;">Lokale Richtlinien</div>
<svg class="a" style="left:101.6px;top:185.8px" width="10" height="10"><use href="#c-col"/></svg>
<svg class="a" style="left:118px;top:182px" width="16" height="16"><use href="#i-srvdoc"/></svg>
<div class="t" style="left:139.5px;top:182px;letter-spacing:-0.072px;">Überwachungsrichtlinie</div>
<div class="a" style="left:116px;top:199px;width:200px;height:18px;background:#d9d9d9"></div>
<svg class="a" style="left:101.6px;top:203.8px" width="10" height="10"><use href="#c-col"/></svg>
<svg class="a" style="left:118px;top:200px" width="16" height="16"><use href="#i-srvdoc"/></svg>
<div class="t" style="left:139.5px;top:200px;letter-spacing:-0.443px;">Zuweisen von Benutzerrechten</div>
<svg class="a" style="left:101.6px;top:221.8px" width="10" height="10"><use href="#c-col"/></svg>
<svg class="a" style="left:118px;top:218px" width="16" height="16"><use href="#i-srvdoc"/></svg>
<div class="t" style="left:139.5px;top:218px;letter-spacing:-0.343px;">Sicherheitsoptionen</div>
<svg class="a" style="left:82.6px;top:239.8px" width="10" height="10"><use href="#c-col"/></svg>
<svg class="a" style="left:99px;top:236px" width="16" height="16"><use href="#i-srvdoc"/></svg>
<div class="t" style="left:120.5px;top:236px;letter-spacing:-0.303px;">Ereignisprotokoll</div>
<svg class="a" style="left:82.6px;top:257.8px" width="10" height="10"><use href="#c-col"/></svg>
<svg class="a" style="left:99px;top:254px" width="16" height="16"><use href="#i-flock"/></svg>
<div class="t" style="left:120.5px;top:254px;letter-spacing:-0.694px;">Eingeschränkte Gruppen</div>
<svg class="a" style="left:82.6px;top:275.8px" width="10" height="10"><use href="#c-col"/></svg>
<svg class="a" style="left:99px;top:272px" width="16" height="16"><use href="#i-flock"/></svg>
<div class="t" style="left:120.5px;top:272px;letter-spacing:-0.341px;">Systemdienste</div>
<svg class="a" style="left:82.6px;top:293.8px" width="10" height="10"><use href="#c-col"/></svg>
<svg class="a" style="left:99px;top:290px" width="16" height="16"><use href="#i-flock"/></svg>
<div class="t" style="left:120.5px;top:290px;letter-spacing:-0.423px;">Registrierung</div>
<svg class="a" style="left:82.6px;top:311.8px" width="10" height="10"><use href="#c-col"/></svg>
<svg class="a" style="left:99px;top:308px" width="16" height="16"><use href="#i-flock"/></svg>
<div class="t" style="left:120.5px;top:308px;letter-spacing:-0.303px;">Dateisystem</div>
<svg class="a" style="left:82.6px;top:329.8px" width="10" height="10"><use href="#c-hot"/></svg>
<svg class="a" style="left:99px;top:326px" width="16" height="16"><use href="#i-ipsec"/></svg>
<div class="t" style="left:120.5px;top:326px;letter-spacing:0.044px;">Richtlinien für Kabelnetzwerke</div>
<svg class="a" style="left:82.6px;top:347.8px" width="10" height="10"><use href="#c-col"/></svg>
<svg class="a" style="left:99px;top:344px" width="16" height="16"><use href="#i-folder"/></svg>
<div class="t" style="left:120.5px;top:344px;letter-spacing:-0.231px;">Windows Defender Firewall</div>
<svg class="a" style="left:99px;top:362px" width="16" height="16"><use href="#i-folder"/></svg>
<div class="t" style="left:120.5px;top:362px;letter-spacing:-0.116px;">Netzwerklisten-Manager</div>
<svg class="a" style="left:82.6px;top:383.8px" width="10" height="10"><use href="#c-col"/></svg>
<svg class="a" style="left:99px;top:380px" width="16" height="16"><use href="#i-wifi"/></svg>
<div class="t" style="left:120.5px;top:380px;letter-spacing:-0.248px;">Drahtlosnetzwerkrichtlinien</div>
<svg class="a" style="left:82.6px;top:401.8px" width="10" height="10"><use href="#c-col"/></svg>
<svg class="a" style="left:99px;top:398px" width="16" height="16"><use href="#i-folder"/></svg>
<div class="t" style="left:120.5px;top:398px;letter-spacing:0.044px;">Richtlinien für öffentliche Schlüssel</div>
<svg class="a" style="left:82.6px;top:419.8px" width="10" height="10"><use href="#c-col"/></svg>
<svg class="a" style="left:99px;top:416px" width="16" height="16"><use href="#i-folder"/></svg>
<div class="t" style="left:120.5px;top:416px;letter-spacing:0.044px;">Richtlinien für Softwareeinschränkung</div>
<svg class="a" style="left:82.6px;top:437.8px" width="10" height="10"><use href="#c-col"/></svg>
<svg class="a" style="left:99px;top:434px" width="16" height="16"><use href="#i-folder"/></svg>
<div class="t" style="left:120.5px;top:434px;letter-spacing:-0.955px;">Anwendungssteuerungsrichtlinien</div>
</div>
<div class="a" style="left:264px;top:160px;width:17px;height:438px;background:#f0f0f0"></div>
<div class="a" style="left:264px;top:178px;width:17px;height:292px;background:#cdcdcd"></div>
<svg class="a" style="left:264px;top:160px" width="17" height="438"><g fill="none" stroke="#5a5a5a" stroke-width="1.900"><path d="M4.500 11.500l4-4 4 4"/><path d="M4.500 426.500l4 4 4-4"/></g></svg>
<div class="a" style="left:89px;top:598px;width:192px;height:18px;background:#f0f0f0"></div>
<div class="a" style="left:107px;top:598px;width:39px;height:18px;background:#cdcdcd"></div>
<svg class="a" style="left:89px;top:598px" width="175" height="18"><g fill="none" stroke="#5a5a5a" stroke-width="1.900"><path d="M11.500 4.500l-4 4 4 4"/><path d="M163.500 4.500l4 4-4 4"/></g></svg>
<div class="a" style="left:286px;top:159px;width:587px;height:458px;background:#fff;border:1px solid #828790"></div>
<div class="clip" style="left:688px;top:161px;width:138px;height:23px"><div class="t" style="left:-2px;top:5px;letter-spacing:-0.245px;">ieneinstellung</div></div>
<div class="a" style="left:826px;top:161px;width:1px;height:23px;background:#e5e5e5"></div>
<div class="a" style="left:287px;top:337px;width:540px;height:19px;background:#efefef"></div>
<div class="clip" style="left:688px;top:184px;width:167px;height:432px">
<div class="t" style="left:-4px;top:3px;letter-spacing:-0.017px;">Dienst,Administratoren,...</div>
<div class="t" style="left:1px;top:22px;letter-spacing:0.076px;">finiert</div>
<div class="t" style="left:0.5px;top:41px;letter-spacing:-0.054px;">tratoren,Window Mana...</div>
<div class="t" style="left:1px;top:60px;letter-spacing:0.076px;">finiert</div>
<div class="t" style="left:1px;top:79px;letter-spacing:0.076px;">finiert</div>
<div class="t" style="left:1px;top:98px;letter-spacing:0.076px;">finiert</div>
<div class="t" style="left:0.5px;top:117px;letter-spacing:-0.133px;">tratoren,Sicherungs-Op...</div>
<div class="t" style="left:1px;top:136px;letter-spacing:0.076px;">finiert</div>
<div class="t" style="left:-2.5px;top:155px;letter-spacing:-0.027px;">desktopbenutzer,Admin...</div>
<div class="t" style="left:1px;top:174px;letter-spacing:0.076px;">finiert</div>
<div class="t" style="left:-4px;top:193px;letter-spacing:-0.137px;">Dienst,Netzwerkdienst,A...</div>
<div class="t" style="left:1px;top:212px;letter-spacing:0.076px;">finiert</div>
<div class="t" style="left:1px;top:231px;letter-spacing:0.076px;">finiert</div>
<div class="t" style="left:0.5px;top:250px;letter-spacing:0.100px;">ministratoren,Authentif...</div>
<div class="t" style="left:-1.5px;top:269px;letter-spacing:-0.190px;">kaler Dienst,Netzwerkdi...</div>
<div class="t" style="left:0.5px;top:288px;letter-spacing:-0.151px;">tratoren</div>
<div class="t" style="left:1px;top:307px;letter-spacing:0.076px;">finiert</div>
<div class="t" style="left:1px;top:326px;letter-spacing:0.076px;">finiert</div>
<div class="t" style="left:0.5px;top:345px;letter-spacing:-0.151px;">tratoren</div>
<div class="t" style="left:0.5px;top:364px;letter-spacing:-0.151px;">tratoren</div>
<div class="t" style="left:-4px;top:383px;letter-spacing:-0.092px;">Dienst,Netzwerkdienst</div>
<div class="t" style="left:0.5px;top:402px;letter-spacing:-0.151px;">tratoren</div>
</div>
<div class="clip" style="left:287px;top:600px;width:568px;height:16px">
<svg class="a" style="left:5px;top:5px" width="16" height="16"><use href="#i-srvdoc"/></svg>
<div class="t" style="left:21px;top:5px;letter-spacing:-0.292px;">Erstellen eines Profils der Systemleistung</div>
<div class="t" style="left:356px;top:5px;letter-spacing:-0.538px;">Administratoren,NT SERVICE\W...</div>
</div>
<div class="a" style="left:855px;top:160px;width:17px;height:456px;background:#f0f0f0"></div>
<div class="a" style="left:855px;top:179px;width:17px;height:204px;background:#cdcdcd"></div>
<svg class="a" style="left:855px;top:160px" width="17" height="456"><g fill="none" stroke="#5a5a5a" stroke-width="1.900"><path d="M4.500 12.500l4-4 4 4"/><path d="M4.500 443.500l4 4 4-4"/></g></svg>
<div class="a" style="left:88px;top:617px;width:785px;height:23px;background:#f0f0f0"></div>
<div class="a" style="left:652px;top:619px;width:1px;height:20px;background:#d7d7d7"></div>
<div class="a" style="left:785px;top:619px;width:1px;height:20px;background:#d7d7d7"></div>
<div class="a" style="left:272px;top:105px;width:417px;height:507px;background:#f0f0f0;border:1px solid #0b6fc4"></div>
<div class="a" style="left:273px;top:106px;width:415px;height:30px;background:#0063b1"></div>
<div class="t" style="left:281px;top:113px;letter-spacing:-0.050px;color:#fff">Eigenschaften von Anmelden über Remotedesktopdienst...</div>
<div class="t" style="left:616px;top:113px;font-size:13px;color:#fff">?</div>
<svg class="a" style="left:659px;top:114px" width="12" height="12"><path d="M1 1l10 10M11 1L1 11" stroke="#fff" stroke-width="1.200" fill="none"/></svg>
<div class="a" style="left:279px;top:163px;width:401px;height:411px;background:#fff;border:1px solid #dcdcdc"></div>
<div class="a" style="left:384px;top:145px;width:54px;height:19px;background:#f0f0f0;border:1px solid #d9d9d9;border-bottom:none"></div>
<div class="a" style="left:279px;top:143px;width:106px;height:21px;background:#fff;border:1px solid #dcdcdc;border-bottom:none"></div>
<div class="m" style="left:287px;top:146px;letter-spacing:-0.236px;">Sicherheitsrichtlinie</div>
<div class="m" style="left:389px;top:148px;letter-spacing:-0.316px;">Erklärung</div>
<svg class="a" style="left:294px;top:176px" width="32" height="32" viewBox="0 0 32 32">
<defs><linearGradient id="sv1" x1="0" y1="0" x2="1" y2="0"><stop offset="0" stop-color="#f6f8f9"/><stop offset="1" stop-color="#aab1b6"/></linearGradient>
<linearGradient id="sv2" x1="0" y1="0" x2="1" y2="1"><stop offset="0" stop-color="#c9cdd0"/><stop offset="1" stop-color="#8b9196"/></linearGradient></defs>
<path d="M4.500 1.500h8v16h-8z" fill="url(#sv1)" stroke="#80878c" stroke-width=".8"/>
<path d="M12.500 1.500l4 1.500v13l-4 1.500z" fill="#8b9297"/>
<path d="M5.300 3h6.400M5.300 5.500h6.400M5.300 8h6.400M5.300 10.500h6.400" stroke="#5f666b" stroke-width="1"/>
<rect x="5.300" y="12" width="6.400" height="2.500" fill="#f5f7f8"/>
<path d="M14.500 3.500h8v27h-8z" fill="url(#sv1)" stroke="#7a8186" stroke-width=".8"/>
<path d="M22.500 3.500l9 .8v20l-9 6.200z" fill="url(#sv2)" stroke="#70777c" stroke-width=".6"/>
<path d="M15.300 5h6.400M15.300 7.500h6.400M15.300 10h6.400M15.300 12.500h6.400M15.300 18h6.400M15.300 20.500h6.400M15.300 23h6.400M15.300 25.500h6.400" stroke="#5f666b" stroke-width="1"/>
<rect x="15.300" y="14" width="6.400" height="2.500" fill="#f5f7f8"/>
<rect x="19.300" y="27.200" width="2.200" height="2.200" fill="#5fe04a" stroke="#2e9a2a" stroke-width=".4"/>
<path d="M26 22l4-2.500M26 24l4-2.500M26 26l4-2.500" stroke="#6b7277" stroke-width=".5"/>
<path d="M3.500 16.500h11.500c1 0 1 2-.3 2h-1v10c0 1.500-1 2.500-2 2.500H1.500c-1.500 0-1.500-3 0-3h2z" fill="#fff8dc" stroke="#b5a97c" stroke-width=".9"/>
<path d="M1 28.500h10.500" stroke="#c8b98a" stroke-width=".8"/>
<path d="M5.500 20h6M5.500 22.200h6M5.500 24.400h6M5.500 26.600h6" stroke="#8a86b8" stroke-width="1.100"/>
<path d="M13.800 16.800l2 .3-.6 1.500z" fill="#d9a441"/>
</svg>
<div class="m" style="left:343px;top:176px;letter-spacing:-0.229px;">Anmelden über Remotedesktopdienste zulassen</div>
<div class="a" style="left:294px;top:223px;width:13px;height:13px;background:#fff;border:1px solid #333"></div>
<svg class="a" style="left:294px;top:223px" width="13" height="13"><path d="M2.500 6.500l3 3 5.500-6" fill="none" stroke="#222" stroke-width="1.200"/></svg>
<div class="m" style="left:310px;top:222px;letter-spacing:-0.205px;">Diese Richtlinieneinstellungen definieren:</div>
<div class="a" style="left:294px;top:246px;width:356px;height:167px;background:#fff;border:1px solid #828790"></div>
<div class="m" style="left:298px;top:248px;letter-spacing:-0.375px;">Administratoren</div>
<div class="m" style="left:298px;top:261px;letter-spacing:-0.178px;">Remotedesktopbenutzer</div>
<div class="btn" style="left:295px;top:429px;width:184px"></div>
<div class="m" style="left:303px;top:433px;letter-spacing:-0.200px;">Benutzer oder Gruppe hinzufügen...</div>
<div class="btn dis" style="left:487px;top:429px;width:73px"></div>
<div class="m" style="left:500.5px;top:433px;letter-spacing:-0.300px;color:#838383">Entfernen</div>
<svg class="a" style="left:295px;top:463px" width="30" height="30"><circle cx="15" cy="15" r="15" fill="#0078d7"/><rect x="14" y="12" width="2" height="11" fill="#fff"/><rect x="14" y="7" width="2" height="2.500" fill="#fff"/></svg>
<div class="m" style="left:331px;top:459px;letter-spacing:-0.216px;">Diese Einstellung ist mit Computern, die Windows 2000 Service</div>
<div class="m" style="left:331px;top:472px;letter-spacing:-0.142px;">Pack 1 oder früher ausführen, nicht kompatibel. Wenden Sie</div>
<div class="m" style="left:331px;top:485px;letter-spacing:-0.249px;">Gruppenrichtlinienobjekte mit dieser Einstellung nur auf Computer</div>
<div class="m" style="left:331px;top:498px;letter-spacing:-0.236px;">an, die eine höhere Version des Betriebssystems ausführen.</div>
<div class="btn" style="left:446px;top:582px;width:73px;border:2px solid #0078d7"></div>
<div class="m" style="left:474.5px;top:586px;letter-spacing:0.394px;">OK</div>
<div class="btn" style="left:527px;top:582px;width:73px"></div>
<div class="m" style="left:537px;top:586px;letter-spacing:-0.177px;">Abbrechen</div>
<div class="btn dis" style="left:608px;top:582px;width:73px"></div>
<div class="m" style="left:614.5px;top:586px;letter-spacing:-0.338px;color:#838383">Übernehmen</div>
<div class="a" style="left:0;top:727px;width:1360px;height:40px;background:#02192f"></div>
<div class="a" style="left:0;top:767px;width:1360px;height:3px;background:#f0f0f0"></div>
<div class="a" style="left:292px;top:727px;width:48px;height:40px;background:#0a3869"></div>
<div class="a" style="left:198px;top:765px;width:40px;height:2px;background:#9fd0f8"></div>
<div class="a" style="left:247px;top:765px;width:40px;height:2px;background:#9fd0f8"></div>
<div class="a" style="left:292px;top:765px;width:48px;height:2px;background:#9fd0f8"></div>
<svg class="a" style="left:13px;top:739px" width="16" height="16"><path d="M0 2.300l6.600-.9v6.300H0zM7.400 1.300L16 0v7.700H7.400zM0 8.500h6.600v6.300L0 13.900zM7.400 8.500H16V16l-8.600-1.200z" fill="#fff"/></svg>
<svg class="a" style="left:60px;top:739px" width="18" height="16"><g fill="none" stroke="#fff" stroke-width="1.100"><rect x="2" y="3" width="9.500" height="8.500"/><path d="M1 2.500V.6h11.500v1.900M1 12v1.900h11.500V12M15.500 0v15"/></g><rect x="14" y="4" width="3" height="3" fill="#fff"/></svg>
<svg class="a" style="left:107px;top:734px" width="26" height="26" viewBox="0 0 26 26">
<defs><linearGradient id="eg1" x1="0" y1="0" x2="1" y2="1"><stop offset="0" stop-color="#36c1e8"/><stop offset=".5" stop-color="#2f9de0"/><stop offset="1" stop-color="#1458b8"/></linearGradient>
<linearGradient id="eg2" x1="0" y1="0" x2="1" y2="0"><stop offset="0" stop-color="#2fa0e0"/><stop offset="1" stop-color="#5fd860"/></linearGradient></defs>
<circle cx="13" cy="13" r="12.300" fill="url(#eg1)"/>
<path d="M1 11C3 3 11 -1 18 2c5 2.200 7.500 6.500 7 11-1.500 2.800-5 3.500-9 2.500 1.500-1.500 1.500-4-.5-5.500-3-2-8-1-9.500 3-.8 2-.8 4 0 6C2 16.500.5 14 1 11z" fill="url(#eg2)"/>
<path d="M10 12c-3 2.500-3 8 1 11 3 2 7 2 10.500-.5-4.500 1-9-1-9.500-5-.3-2 .5-3.500 1.500-4.500-1-.8-2.300-1.200-3.500-1z" fill="#0f4ea8"/>
</svg>
<svg class="a" style="left:157px;top:737px" width="24" height="20" viewBox="0 0 24 20">
<path d="M1 3c0-.8.500-1.300 1.300-1.300h6l1.500 2H22c.8 0 1.300.5 1.300 1.300v12.500c0 .8-.5 1.300-1.300 1.300H2.300c-.8 0-1.300-.5-1.300-1.300z" fill="#f8c93c"/>
<path d="M1 3c0-.8.500-1.300 1.300-1.300h6l1.500 2H1z" fill="#e0a020"/>
<path d="M1 7h22.300v10.500c0 .8-.5 1.300-1.300 1.300H2.300c-.8 0-1.300-.5-1.300-1.300z" fill="#fcd860"/>
<path d="M7 12h10v7H7z" fill="#3a96e0"/><path d="M9.500 15h5v4h-5z" fill="#fcd860"/>
</svg>
<svg class="a" style="left:205px;top:734px" width="26" height="26" viewBox="0 0 26 26">
<rect x="2" y="1.500" width="10" height="20" fill="#2b8fe0" stroke="#fff" stroke-width="1.200"/>
<path d="M3 5.500h8M3 8.500h8" stroke="#bfe0fa" stroke-width="1"/>
<path d="M11 14v-2.500c0-1 9-1 9 0V14" fill="none" stroke="#fff" stroke-width="1.200"/>
<rect x="6.500" y="14" width="18.500" height="10.500" rx="1" fill="#6f8ea6" stroke="#fff" stroke-width="1.300"/>
<path d="M7 18h17.500" stroke="#e8eef2" stroke-width="1"/><rect x="9" y="17" width="1.800" height="2.800" fill="#fff"/><rect x="20.500" y="17" width="1.800" height="2.800" fill="#fff"/>
</svg>
<svg class="a" style="left:255px;top:734px" width="26" height="26" viewBox="0 0 26 26">
<path d="M4.200 1.500h17.300c1.600 0 1.600 3-.4 3h-1.300v14.500c0 2-1.500 3.500-3 3.500H3c-2 0-2-3.300 0-3.300h1.200z" fill="#fffbe6" stroke="#ecdca0" stroke-width="1"/>
<path d="M1.800 19.500h12c1.300 0 1.300 2.700 0 2.700H2.500z" fill="#fbeeb8" stroke="#e6cf80" stroke-width=".8"/>
<path d="M7.500 5.500h9M7.500 8h9M7.500 10.500h9M7.500 13h5" stroke="#c4c1be" stroke-width="1"/>
<path d="M20.300 1.800l2.500.5-.8 2z" fill="#e2b84a"/>
<path d="M13 15.500v-1.800c0-1.200 6-1.200 6 0v1.800" fill="none" stroke="#5a646b" stroke-width="1.300"/>
<path d="M8.500 15.500h13l2.500 1.500v7.500h-13l-2.500-1.500z" fill="#9aa3a9" stroke="#59636a" stroke-width=".9"/>
<path d="M8.500 18.500l2.500 1.500h13M11 20v4.500" stroke="#59636a" stroke-width=".8" fill="none"/>
<rect x="15.500" y="19" width="2.200" height="2.400" fill="#e8edf0" stroke="#59636a" stroke-width=".4"/>
</svg>
<svg class="a" style="left:305px;top:735px" width="24" height="24" viewBox="0 0 24 24">
<path d="M3.200 .5h17.300c1.600 0 1.600 3-.4 3h-1.300v14.800c0 2-1.500 3.700-3 3.700H2c-2 0-2-3.300 0-3.300h1.200z" fill="#fffbe6" stroke="#ecdca0" stroke-width="1"/>
<path d="M.8 19h15.500c1.300 0 1.300 2.700 0 2.700H1.500z" fill="#fbeeb8" stroke="#e6cf80" stroke-width=".8"/>
<path d="M6.500 4.800h9M6.500 9.600h9M6.500 11.800h9M6.500 14h9" stroke="#b9b6b4" stroke-width="1"/>
<path d="M6.500 7.200h9M6.500 16.500h9" stroke="#e4dfd0" stroke-width="1.600"/>
<path d="M19.300 .8l2.500.5-.8 2z" fill="#e2b84a"/>
</svg>
<svg class="a" style="left:1175px;top:740px" width="18" height="13"><g fill="none" stroke="#fff" stroke-width="1.100"><rect x="4.500" y="3.500" width="10.500" height="7.500"/><path d="M15 5.500h1.500v3.500H15"/><path d="M2.500 .5v3M4.500 .5v3M1 3.500h5v2.500c0 1.500-1 2-2.500 2s-2.500-.5-2.500-2zM3.500 8v3.500" /></g><rect x="6" y="5" width="7.500" height="4.500" fill="#fff"/></svg>
<svg class="a" style="left:1200px;top:740px" width="17" height="15"><g fill="none" stroke="#fff" stroke-width="1.100"><rect x="3.500" y="1.500" width="12.500" height="8"/><path d="M9.500 9.500v3M5.500 13h8.500"/><rect x=".6" y=".6" width="4" height="4" fill="#02192f"/><path d="M2.600 4.600v8.400"/></g></svg>
<svg class="a" style="left:1224px;top:740px" width="18" height="16"><path d="M1 4.500h2.500l3.500-3.500v10.500l-3.500-3.500H1z" fill="none" stroke="#fff" stroke-width="1.100"/><circle cx="12" cy="11" r="4.500" fill="#e81123"/><path d="M10 9l4 4M14 9l-4 4" stroke="#fff" stroke-width="1.200"/></svg>
<div class="t" style="left:1247px;top:730px;width:60px;text-align:center;color:#fff;font-size:11px;letter-spacing:-.08px">08:52</div>
<div class="t" style="left:1247px;top:748px;width:60px;text-align:center;color:#fff;font-size:11px;letter-spacing:-.18px">19.04.2023</div>
<svg class="a" style="left:1322px;top:739px" width="17" height="16"><path d="M.6 .6h15.800v11h-5.400l-2.500 2.600-2.500-2.600H.6z" fill="none" stroke="#fff" stroke-width="1.200"/></svg>
<div class="a" style="left:1358px;top:727px;width:1px;height:40px;background:#8a939c"></div>
</body></html>
